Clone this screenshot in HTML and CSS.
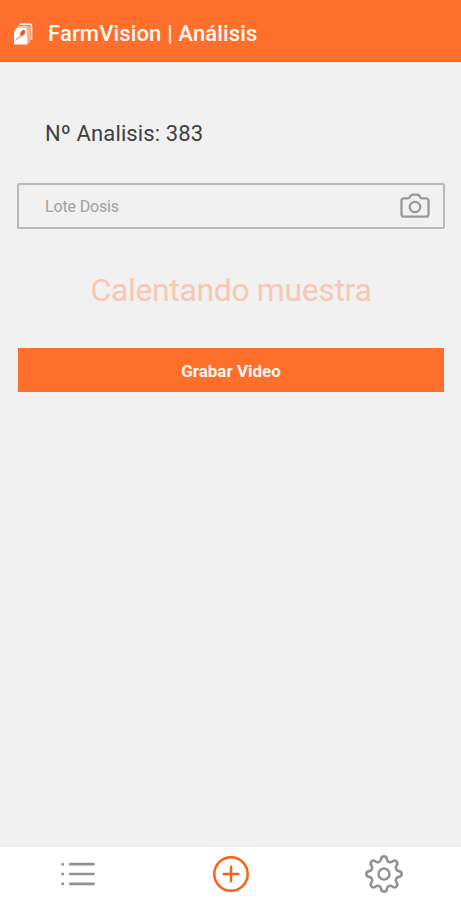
FILE: index.html
```html
<!DOCTYPE html>
<html lang="es">
<head>
<meta charset="utf-8">
<meta name="viewport" content="width=device-width, initial-scale=1">
<title>FarmVision | Análisis</title>
<link rel="stylesheet" href="styles.css">
</head>
<body>
<header class="header">
  <svg class="logo" viewBox="0 0 20 22" aria-hidden="true">
    <path d="M6.500 1.200H16.500q2 0 2 2V17" fill="none" stroke="#ffeee6" stroke-width="1.700"/>
    <path d="M4 3.600H14q2 0 2 2V20" fill="none" stroke="#ffc5aa" stroke-width="1.500"/>
    <path d="M4.500 4.500H12.500q2 0 2 2V21.500H1V8z" fill="#fff"/>
    <ellipse cx="9.700" cy="9.900" rx="2" ry="3.300" transform="rotate(32 9.700 9.900)" fill="#e95b1d"/>
    <path d="M8 12.500C7 15.500 4.500 14 2.500 17.500" fill="none" stroke="#f58b5c" stroke-width="1.100"/>
  </svg>
  <h1 class="title">FarmVision | Análisis</h1>
</header>
<main class="content">
  <p class="number">Nº Analisis: 383</p>
  <div class="field">
    <span class="placeholder">Lote Dosis</span>
    <svg class="camera" viewBox="0 0 30 26" aria-hidden="true">
      <path d="M4 5.300h4.200q1 0 1.500-.9l1.100-1.800q.6-1 1.700-1h5q1.100 0 1.700 1l1.100 1.800q.5.9 1.500.9H26q2.500 0 2.500 2.500v13.400q0 2.500-2.500 2.500H4q-2.500 0-2.500-2.500V7.800q0-2.500 2.500-2.500z"/>
      <circle cx="15" cy="14" r="5.200"/>
    </svg>
  </div>
  <p class="status">Calentando muestra</p>
  <button class="record" type="button">Grabar Video</button>
</main>
<nav class="tabs">
  <a class="tab">
    <svg class="icon" viewBox="-20 -20 40 40" aria-hidden="true">
      <path d="M-7.800-9.800H15.500M-7.800 0H15.500M-7.800 9.800H15.500" stroke-width="2.700"/>
      <path d="M-15.300-9.800h.01M-15.300 0h.01M-15.300 9.800h.01" stroke-width="3"/>
    </svg>
  </a>
  <a class="tab">
    <svg class="icon active" viewBox="-20 -20 40 40" aria-hidden="true">
      <circle r="16.700"/>
      <path d="M-7.300 0H7.300M0-7.300V7.300"/>
    </svg>
  </a>
  <a class="tab">
    <svg class="icon" viewBox="-20 -20 40 40" aria-hidden="true">
      <path transform="scale(1.030)" d="M-2.820-14.530A2.830 2.830 0 0 1 2.820-14.530A3.300 3.300 0 0 0 8.280-12.270A2.830 2.830 0 0 1 12.270-8.280A3.300 3.300 0 0 0 14.530-2.820A2.830 2.830 0 0 1 14.530 2.820A3.300 3.300 0 0 0 12.270 8.280A2.830 2.830 0 0 1 8.280 12.270A3.300 3.300 0 0 0 2.820 14.530A2.830 2.830 0 0 1-2.820 14.530A3.300 3.300 0 0 0-8.280 12.270A2.830 2.830 0 0 1-12.270 8.280A3.300 3.300 0 0 0-14.530 2.820A2.830 2.830 0 0 1-14.530-2.820A3.300 3.300 0 0 0-12.270-8.280A2.830 2.830 0 0 1-8.280-12.270A3.300 3.300 0 0 0-2.820-14.530z"/>
      <circle r="5.500"/>
    </svg>
  </a>
</nav>
</body>
</html>
```
FILE: styles.css
```css
* { box-sizing: border-box; }

body {
  margin: 0;
  height: 900px;
  display: flex;
  flex-direction: column;
  background: #f1f1f1;
  font-family: Roboto, "Liberation Sans", sans-serif;
}

h1, p { margin: 0; }

.header {
  height: 62px;
  flex: none;
  display: flex;
  align-items: center;
  gap: 15px;
  padding: 6px 13px 0;
  background: #ff6f2c;
  box-shadow: inset 0 -1px #fb650f;
}

.logo { width: 20px; height: 22px; }

.title {
  color: #fff8f3;
  font-size: 22px;
  line-height: 28px;
  font-weight: 500;
  letter-spacing: .150px;
  white-space: nowrap;
}

.content {
  flex: 1;
  display: flex;
  flex-direction: column;
  padding: 57px 16px 0 17px;
}

.number {
  padding-left: 28px;
  font-size: 22px;
  line-height: 30px;
  color: #404040;
  letter-spacing: .130px;
}

.field {
  height: 46px;
  margin-top: 34px;
  padding: 0 13px 0 26px;
  display: flex;
  align-items: center;
  justify-content: space-between;
  border: 2px solid #b9b9b9;
  border-radius: 2px;
}

.placeholder {
  color: #a0a0a0;
  font-size: 16px;
  letter-spacing: -.150px;
}

.camera {
  width: 30px;
  height: 26px;
  fill: none;
  stroke: #999;
  stroke-width: 2.300;
}

.status {
  margin-top: 41px;
  text-align: center;
  font-size: 32px;
  line-height: 40px;
  letter-spacing: -.380px;
  color: #f6c8b3;
}

.record {
  height: 44px;
  margin: 38px 1px 0;
  padding: 2px 0 0;
  border: 0;
  background: #ff6f2c;
  color: #fff6f0;
  font: 700 17px Roboto, "Liberation Sans", sans-serif;
}

.tabs {
  height: 53px;
  flex: none;
  display: grid;
  grid-template-columns: repeat(3, 1fr);
  justify-items: center;
  align-items: center;
  padding-left: 1px;
  background: #fff;
}

.tab { display: flex; }

.icon {
  width: 40px;
  height: 40px;
  fill: none;
  stroke: #929292;
  stroke-width: 2.500;
  stroke-linecap: round;
  stroke-linejoin: round;
}

.active { stroke: #fa6218; }
```
